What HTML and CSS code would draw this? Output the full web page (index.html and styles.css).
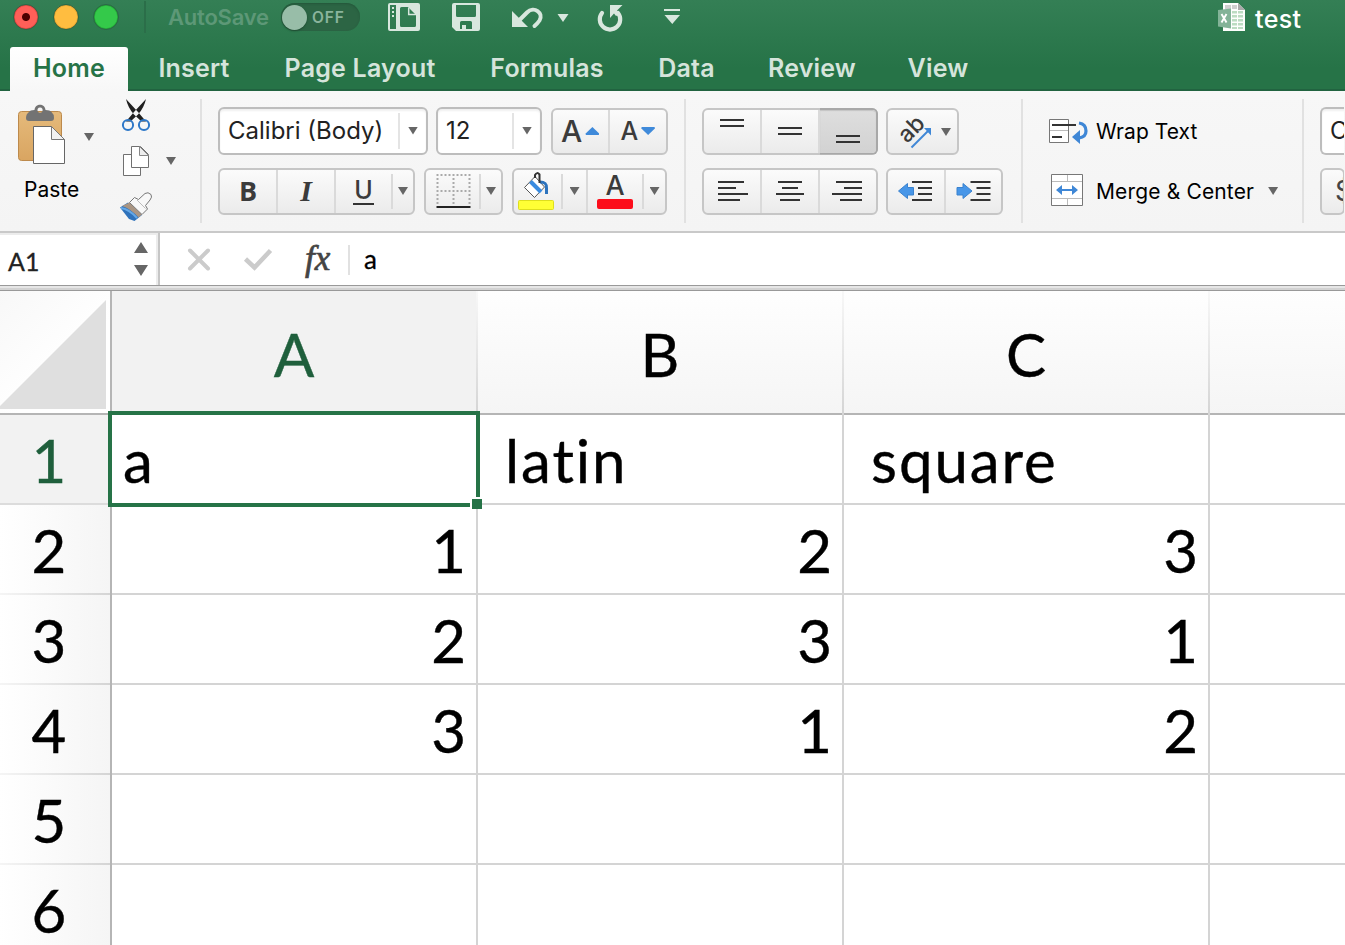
FILE: index.html
```html
<!DOCTYPE html>
<html lang="en">
<head>
<meta charset="utf-8">
<title>test</title>
<link rel="stylesheet" href="styles.css">
</head>
<body>
<header class="titlebar">
  <div class="toprow">
    <div class="lights"><i class="light red"></i><i class="light amber"></i><i class="light green"></i></div>
    <i class="topsep"></i>
    <span class="autosave">AutoSave</span>
    <span class="switch"><i class="knob"></i><span>OFF</span></span>
    <svg class="quick" width="300" height="36" viewBox="385 0 300 36" fill="#d8e7de">
      <path fill-rule="evenodd" d="M390 3H418Q420 3 420 5V29Q420 31 418 31H390Q388 31 388 29V5Q388 3 390 3ZM390 5V29H396V5ZM401.500 7Q400 7 400 8.500V25.500Q400 27 401.500 27H414.500Q416 27 416 25.500V15L408 7Z"/>
      <path d="M392 7h2v2h-2zM392 11h2v2h-2zM392 15h2v2h-2z"/>
      <path d="M408.700 7.500V14.500H416" fill="none" stroke="#d8e7de" stroke-width="1.500"/>
      <path fill-rule="evenodd" d="M454 3H478Q480 3 480 5V29Q480 31 478 31H456L452 27V5Q452 3 454 3ZM456 5V15.500Q456 17 457.500 17H474.500Q476 17 476 15.500V5ZM461.500 21Q460 21 460 22.500V29H462V25H466V29H472V22.500Q472 21 470.500 21Z"/>
      <path d="M512 11V27H528Z"/>
      <path d="M519.500 20L527 12.500C534 5.500 544 13 539.500 20.500Q537.500 23.500 534.500 26" fill="none" stroke="#d8e7de" stroke-width="4" stroke-linecap="round"/>
      <path d="M557.500 14h11l-5.500 8z"/>
      <path d="M602 13A10.200 10.200 0 1 0 618 13" fill="none" stroke="#d8e7de" stroke-width="4.200" stroke-linecap="round"/>
      <path d="M610 5H622.500L617 10.500L620 14L616 16L614 13.500L610 18Z"/>
      <path d="M664 9h16v2h-16zM664.500 15h15.500l-7.750 9z"/>
    </svg>
    <div class="doc">
      <svg width="28" height="30" viewBox="1218 2 28 30">
        <path d="M1223 3H1238L1245 10V31H1223Z" fill="#fdfefd"/>
        <path d="M1225 5h6v4h-6zM1232 5h5v4h-5z" fill="#cfcfcf"/>
        <path d="M1238 3V10H1245Z" fill="#aaa"/>
        <path d="M1232 11h5v2.500h-5zM1238 11h5v2.500h-5zM1232 15h5v2.500h-5zM1238 15h5v2.500h-5zM1232 19h5v2.500h-5zM1238 19h5v2.500h-5zM1232 23h5v2.500h-5zM1238 23h5v2.500h-5zM1232 27h5v2h-5zM1238 27h5v2h-5z" fill="#bcdcc2"/>
        <path d="M1218 10L1231 8.500V28.500L1218 26.500Z" fill="#83b398"/>
        <path d="M1221.500 14L1226.500 22.500M1226.500 14L1221.500 22.500" stroke="#fff" stroke-width="1.900"/>
      </svg>
      <span>test</span>
    </div>
  </div>
  <nav class="tabs">
    <span class="tab active t1">Home</span><span class="tab t2">Insert</span><span class="tab t3">Page Layout</span><span class="tab t4">Formulas</span><span class="tab t5">Data</span><span class="tab t6">Review</span><span class="tab t7">View</span>
  </nav>
</header>

<section class="ribbon">
  <div class="group clip">
    <div class="pastecol">
      <svg width="82" height="66" viewBox="14 102 82 66">
        <defs><linearGradient id="tan" x1="0" y1="0" x2="0" y2="1"><stop offset="0" stop-color="#e5ba7b"/><stop offset="1" stop-color="#d9a561"/></linearGradient></defs>
        <rect x="18.500" y="111.500" width="43" height="49" rx="3" fill="url(#tan)" stroke="#bd8a4c"/>
        <path fill-rule="evenodd" d="M29 112Q30 110 34.500 110C35 103 45 103 45.500 110Q50 110 51.500 112Q54 114 54 118Q54 121 51 121H29Q26 121 26 118Q26 114 29 112ZM40 107.500a2.600 2.600 0 1 0 .1 0Z" fill="#737373"/>
        <path d="M33.500 126.500H51.500L64.500 139.500V163.500H33.500Z" fill="#fff" stroke="#666"/>
        <path d="M51.500 126.500V139.500H64.500Z" fill="#f1f1f1" stroke="#777"/>
        <path d="M84 133h10l-5 8z" fill="#666"/>
      </svg>
      <span>Paste</span>
    </div>
    <svg class="cliptools" width="62" height="130" viewBox="118 96 62 130">
      <path d="M126 99L138 112L146 121.500L141.500 121.500L134 114.500Q128 108 126 99ZM146 99L134 112L126 121.500L130.500 121.500L138 114.500Q144 108 146 99Z" fill="#202020"/>
      <g fill="none" stroke="#2e78c8" stroke-width="2"><circle cx="128" cy="125" r="5.100"/><circle cx="144" cy="125" r="5.100"/></g>
      <path d="M123.500 154.500H140.500V175.500H123.500Z" fill="#fff" stroke="#707070"/>
      <path d="M131.500 146.500H140.500L148.500 154.500V167.500H131.500Z" fill="#fff" stroke="#707070"/>
      <path d="M139.500 146.500V155.500H148.500Z" fill="#eee" stroke="#888"/>
      <path d="M166 157h10l-5 8z" fill="#666"/>
      <path d="M120 207.500L128 202.500L142 215L134.500 221L129 219Z" fill="#2e72bb"/>
      <path d="M122 206L129.500 202.500L142 214.500L138.500 217.500Q131 209 122 206Z" fill="#a99583"/>
      <path d="M121 208Q129 209 137 218" fill="none" stroke="#65a8e7" stroke-width="2"/>
      <path d="M129.500 202.500L134.500 197.500L138.500 199.500L145 193.500Q148 191.500 151 194.500Q152.500 197 150 200L145.500 205.500L147.500 209L142 214.500Z" fill="#f8f8f8" stroke="#777"/>
      <path d="M137 200L145.500 208.500" stroke="#bbb"/>
    </svg>
  </div>
  <i class="vsep"></i>
  <div class="group font">
    <div class="line">
      <div class="combo fontname"><span>Calibri (Body)</span><b><i class="caret"></i></b></div>
      <div class="combo fontsize"><span>12</span><b><i class="caret"></i></b></div>
      <div class="btns sizes">
        <span class="cell"><span class="ga">A</span><i class="up"></i></span>
        <span class="cell"><span class="gs">A</span><i class="down"></i></span>
      </div>
    </div>
    <div class="line">
      <div class="btns biu">
        <span class="cell w58"><b class="gb">B</b></span><span class="cell w58"><span class="gi">I</span></span><span class="cell w55 open"><span class="gu">U</span></span><span class="drop"><i class="caret"></i></span>
      </div>
      <div class="btns borders">
        <span class="cell w53 open"><svg width="36" height="36" viewBox="435.500 173 36 36"><path d="M437 175H472M437 191H472M438 174V206M454 174V206M470 174V206" fill="none" stroke="#aaa" stroke-width="2" stroke-dasharray="2 2"/><path d="M437 207H471" stroke="#222" stroke-width="2"/></svg></span><span class="drop"><i class="caret"></i></span>
      </div>
      <div class="btns fills">
        <span class="cell w47 open bucket"><svg width="42" height="42" viewBox="515 169 42 42"><path d="M524.500 186.500L535 175.500L544.500 186L534.500 196.500Z" fill="#fff" stroke="#555"/><path d="M530.500 180.500L541 191" stroke="#398be0" stroke-width="4"/><path d="M540 181Q547 181 546.500 187V193" fill="none" stroke="#2d73bd" stroke-width="3"/><path d="M535 177V174Q537 170.500 539.500 173.500V182" fill="none" stroke="#333" stroke-width="2"/><rect x="518.500" y="199.500" width="35" height="9" rx="1" fill="#ffff35" stroke="#dede1e"/></svg></span><span class="drop full"><i class="caret"></i></span>
        <span class="cell w56 open fc"><span>A</span><i></i></span><span class="drop"><i class="caret"></i></span>
      </div>
    </div>
  </div>
  <i class="vsep"></i>
  <div class="group align">
    <div class="line">
      <div class="btns tri">
        <span class="cell w58"><svg width="30" height="30" viewBox="717 116 30 30"><path d="M720 120h24M720 126h24" stroke="#333" stroke-width="2"/></svg></span>
        <span class="cell w58"><svg width="30" height="30" viewBox="775 116 30 30"><path d="M778 128h24M778 134h24" stroke="#333" stroke-width="2"/></svg></span>
        <span class="cell last pressed"><svg width="30" height="30" viewBox="833 116 30 30"><path d="M836 136h24M836 142h24" stroke="#333" stroke-width="2"/></svg></span>
      </div>
      <div class="btns orient"><svg width="68" height="44" viewBox="889 109 68 44"><text x="908" y="143" transform="rotate(-45 908 143)" class="ab">ab</text><path d="M912.500 146.500L930 129" stroke="#3f87d6" stroke-width="2"/><path d="M925 127H932V134.500Z" fill="#3f87d6"/><path d="M942 127h10l-5 8z" fill="#666"/></svg></div>
    </div>
    <div class="line">
      <div class="btns tri">
        <span class="cell w58"><svg width="34" height="30" viewBox="715 176 34 30"><path d="M718 182h26M718 188h18M718 194h30M718 200h22" stroke="#333" stroke-width="2"/></svg></span>
        <span class="cell w58"><svg width="34" height="30" viewBox="773 176 34 30"><path d="M778 182h24M782 188h16M776 194h28M780 200h20" stroke="#333" stroke-width="2"/></svg></span>
        <span class="cell last"><svg width="34" height="30" viewBox="831 176 34 30"><path d="M836 182h26M844 188h18M832 194h30M840 200h22" stroke="#333" stroke-width="2"/></svg></span>
      </div>
      <div class="btns indent">
        <span class="cell w58"><svg width="38" height="30" viewBox="897 176 38 30"><path d="M912 182h20M918 188h14M918 194h14M912 200h20" stroke="#333" stroke-width="2"/><path d="M898.500 191L907.500 183.500V187.500H913.500V195H907.500V198.500Z" fill="#4796e8" stroke="#3b82ce"/></svg></span>
        <span class="cell w57"><svg width="38" height="30" viewBox="954.500 176 38 30"><path d="M970 182h20M976 188h14M976 194h14M970 200h20" stroke="#333" stroke-width="2"/><path d="M971.500 191L962.500 183.500V187.500H956.500V195H962.500V198.500Z" fill="#4796e8" stroke="#3b82ce"/></svg></span>
      </div>
    </div>
  </div>
  <i class="vsep"></i>
  <div class="group wrap">
    <div class="line"><svg width="42" height="28" viewBox="1048 118 42 28"><path d="M1049.500 120.500h19v23h-19z" fill="#fff" stroke="#777"/><path d="M1050 131.500h18" stroke="#bbb"/><path d="M1052 126h24M1052 138h10" stroke="#333" stroke-width="2"/><path d="M1079 124Q1086 125 1086 132Q1086 138 1079 139" fill="none" stroke="#3f87d6" stroke-width="3.200"/><path d="M1072 138L1080 131V145Z" fill="#3f87d6"/></svg><span>Wrap Text</span></div>
    <div class="line"><svg width="42" height="36" viewBox="1048 173 42 36"><path d="M1051.500 174.500h31v31h-31z" fill="#fff" stroke="#777"/><path d="M1052 181.500h30M1052 198.500h30M1067.500 175v6M1067.500 199v6" stroke="#bbb"/><path d="M1060 190h14" stroke="#3f87d6" stroke-width="2"/><path d="M1056 190l6-5v10zM1078 190l-6-5v10z" fill="#3f87d6"/></svg><span class="mc">Merge &amp; Center</span><i class="caret"></i></div>
  </div>
  <i class="vsep"></i>
  <div class="group number">
    <div class="line"><div class="combo numfmt"><span>C</span></div></div>
    <div class="line"><div class="btns money"><span>$</span></div></div>
  </div>
</section>

<section class="formulabar">
  <div class="namebox"><span>A1</span><svg width="16" height="36" viewBox="133 242 16 36" fill="#666"><path d="M134 253h14l-7-11zM134 265h14l-7 11z"/></svg></div>
  <svg class="marks" width="90" height="30" viewBox="185 246 90 30" fill="none" stroke="#cbcbcb" stroke-width="4"><path d="M190 251.500L208 269.500M208 251.500L190 269.500" stroke-linecap="round"/><path d="M245.500 260L254.500 268.500L270.500 251.500" stroke-width="4.500"/></svg>
  <span class="fx">fx</span>
  <i class="fsep"></i>
  <span class="content">a</span>
</section>
<div class="splitter"></div>

<main class="sheet">
  <div class="corner"><svg width="106" height="109" viewBox="0 0 106 109"><path d="M106 0V109H0V106Z" fill="#dfdfdf"/></svg></div>
  <div class="ch sel">A</div><div class="ch">B</div><div class="ch">C</div><div class="ch end"></div>
  <div class="rh sel">1</div><div class="c txt active">a<i class="outline"></i><i class="handle"></i></div><div class="c txt">latin</div><div class="c txt">square</div><div class="c end"></div>
  <div class="rh">2</div><div class="c">1</div><div class="c">2</div><div class="c">3</div><div class="c end"></div>
  <div class="rh">3</div><div class="c">2</div><div class="c">3</div><div class="c">1</div><div class="c end"></div>
  <div class="rh">4</div><div class="c">3</div><div class="c">1</div><div class="c">2</div><div class="c end"></div>
  <div class="rh">5</div><div class="c"></div><div class="c"></div><div class="c"></div><div class="c end"></div>
  <div class="rh">6</div><div class="c"></div><div class="c"></div><div class="c"></div><div class="c end"></div>
</main>
</body>
</html>
```
FILE: styles.css
```css
* { box-sizing: border-box; }
body {
  margin: 0;
  width: 1345px;
  height: 945px;
  overflow: hidden;
  display: flex;
  flex-direction: column;
  background: #fff;
  font-family: Inter, "Liberation Sans", sans-serif;
  color: #000;
}
svg { display: block; flex: none; }

/* title bar */
.titlebar {
  height: 91px;
  flex: none;
  background: linear-gradient(#347f55, #267347 75%);
  box-shadow: inset 0 -2px #216340;
}
.toprow { display: flex; height: 47px; align-items: flex-start; }
.lights { display: flex; gap: 14px; padding: 4px 0 0 13px; }
.light { width: 26px; height: 26px; border-radius: 50%; border: 1px solid #2b6646; background-clip: padding-box; }
.red { background: radial-gradient(circle, #4d0000 0 3.5px, #ff5f58 4.500px 10.500px, #d83e38 12px); }
.amber { background: radial-gradient(circle, #ffbd40 10.500px, #dc9c28 12px); }
.green { background: radial-gradient(circle, #34c94a 10.500px, #1ea231 12px); }
.topsep { width: 2px; height: 32px; margin: 1px 22px 0 25px; background: #2b6e49; }
.autosave { width: 113px; font-size: 22px; font-weight: 600; line-height: 34px; letter-spacing: -.2px; color: #5d9877; white-space: nowrap; }
.switch { display: flex; align-items: center; width: 79px; height: 28px; margin-top: 3px; border-radius: 14px; background: #2c6544; box-shadow: inset 0 1px 2px #24573a; color: #8ab49c; font-size: 15.500px; font-weight: 600; letter-spacing: .9px; }
.knob { width: 25px; height: 25px; margin: 0 5px 0 1px; border-radius: 50%; background: #98bda8; box-shadow: 0 1px 2px #1d4b31; }
.quick { margin-left: 25px; }
.doc { display: flex; margin: 2px 0 0 533px; gap: 9px; color: #fff; font-size: 25px; font-weight: 500; line-height: 35px; letter-spacing: .4px; }
.tabs { display: flex; height: 44px; padding-left: 10px; font-size: 25px; font-weight: 600; line-height: 42px; letter-spacing: .2px; color: #d5e4db; }
.tab { text-align: center; white-space: nowrap; }
.tab.active { color: #267347; background: linear-gradient(#fff, #f7f7f7); border-radius: 3px 3px 0 0; margin-right: 3px; }
.t1 { width: 118px; } .t2 { width: 126px; } .t3 { width: 206px; } .t4 { width: 168px; } .t5 { width: 111px; } .t6 { width: 140px; } .t7 { width: 112px; }

/* ribbon */
.ribbon { display: flex; height: 142px; flex: none; border-bottom: 2px solid #c9c9c9; background: linear-gradient(#f7f7f7, #f4f4f4); font-size: 21px; overflow: hidden; }
.vsep { flex: none; width: 2px; height: 124px; margin-top: 8px; background: #e1e1e1; }
.group { flex: none; display: flex; }
.clip { width: 200px; padding-left: 14px; }
.pastecol { width: 104px; padding-top: 11px; line-height: 44px; }
.pastecol span { display: block; padding-left: 10px; }
.cliptools { margin-top: 5px; }
.font, .align, .wrap, .number { flex-direction: column; gap: 12px; padding-top: 16px; }
.font { width: 482px; padding-left: 16px; }
.align { width: 335px; padding-left: 16px; }
.wrap { width: 279px; padding-left: 25px; }
.number { width: 40px; padding-left: 16px; overflow: hidden; }
.line { display: flex; height: 48px; align-items: center; gap: 8px; }
.combo { flex: none; display: flex; align-items: center; height: 48px; border: 2px solid #bdbdbd; border-radius: 6px; background: #fff; box-shadow: inset 0 2px 2px #f0f0f0; font-size: 24px; line-height: 44px; color: #222; padding-left: 8px; padding-bottom: 1px; white-space: nowrap; overflow: hidden; }
.combo b { height: 36px; width: 28px; margin-left: auto; border-left: 2px solid #e4e4e4; display: flex; align-items: center; justify-content: center; }
.fontname { width: 210px; } .fontsize { width: 106px; }
.numfmt, .money { width: 25px; border-right: 0; border-radius: 6px 0 0 6px; }
.caret { flex: none; width: 10px; height: 8px; background: #666; clip-path: polygon(0 0, 100% 0, 50% 100%); }
.btns { flex: none; display: flex; height: 47px; border: 2px solid #c6c6c6; border-radius: 6px; background: linear-gradient(#fbfbfb, #ebebeb); overflow: hidden; }
.cell { flex: none; display: flex; align-items: center; justify-content: center; height: 100%; border-right: 2px solid #dadada; color: #3b3b3b; }
.cell:last-child, .open { border-right: 0; }
.w58 { width: 58px; } .w57 { width: 55px; } .w56 { width: 56px; } .w55 { width: 55px; } .w53 { width: 53px; } .w47 { width: 47px; }
.drop { display: flex; flex: 1; align-items: center; justify-content: center; height: 35px; margin-top: 4px; border-left: 2px solid #dadada; }
.drop.full { flex: none; width: 25px; }
.sizes { width: 117px; margin-left: .5px; }
.sizes .cell { flex: 1; gap: 3px; font-weight: 500; }
.ga { font-size: 30px; } .gs { font-size: 25px; }
.up, .down { width: 14px; height: 8px; background: #3f8ada; clip-path: polygon(50% 0, 100% 85%, 95% 100%, 5% 100%, 0 85%); }
.down { clip-path: polygon(0 15%, 5% 0, 95% 0, 100% 15%, 50% 100%); }
.biu { width: 197px; } .borders { width: 79px; margin-left: 1px; } .fills { width: 155px; margin-left: 1px; }
.gb { font: 700 27px/40px "Open Sans", sans-serif; }
.gi { font: italic 700 30px "Liberation Serif", serif; }
.gu { font-size: 25px; font-weight: 500; line-height: 25px; border-bottom: 2px solid #333; padding: 0 1px; margin-top: 1px; }
.bucket { justify-content: flex-start; }
.bucket svg { margin-left: 1px; }
.fc { flex-direction: column; border-left: 2px solid #dadada; }
.fc span { font-size: 27px; font-weight: 500; line-height: 27px; margin-top: -1px; }
.fc i { width: 36px; height: 10px; border-radius: 2px; background: #fc0d1b; }
.tri { width: 176px; } .indent { width: 117px; } .orient { width: 73px; }
.last { width: 56px; }
.tri .pressed { background: linear-gradient(#dedede, #d2d2d2); box-shadow: inset 0 1px 1px #c4c4c4, 0 0 0 2px #a8a8a8; clip-path: inset(-2px -2px -2px 0); border-radius: 0 4px 4px 0; }
.tri:has(.pressed) { overflow: visible; }
.ab { font: 500 23px Inter, sans-serif; fill: #3b3b3b; }
.wrap .line { gap: 6px; }
.wrap span { letter-spacing: .07px; }
.wrap .mc { margin-right: 8px; letter-spacing: .15px; }
.money { font-size: 28px; color: #444; padding-left: 13px; line-height: 42px; }

/* formula bar */
.formulabar { display: flex; height: 52px; flex: none; align-items: center; background: #fff; padding-top: 1px; }
.namebox { display: flex; justify-content: space-between; align-items: center; width: 160px; height: 52px; margin-top: -1px; padding: 5px 9px 0 8px; border-right: 2px solid #c6c6c6; box-shadow: inset -2px 2px #ececec; font: 25px Lato, sans-serif; color: #222; -webkit-text-stroke: .3px; }
.namebox span { margin-top: -2px; }
.namebox svg { margin-top: -4px; }
.marks { margin-left: 25px; margin-top: 1px; }
.fx { width: 44px; margin-left: 30px; margin-top: -2px; font: italic 400 35px/40px "Liberation Serif", serif; color: #444; -webkit-text-stroke: .7px #444; }
.fsep { width: 2px; height: 30px; background: #e1e1e1; margin: 0 14px 0 -1px; }
.content { font: 26px Lato, sans-serif; -webkit-text-stroke: .3px; margin-top: -1px; }
.splitter { height: 6px; flex: none; background: linear-gradient(#999 0 1px, #e6e6e6 1px 3px, #d2d2d2 3px 5px, #999 5px); }

/* sheet */
.sheet { display: grid; width: 1345px; grid-template-columns: 112px 366px 366px 366px 135px; grid-template-rows: 124px repeat(6, 90px); font: 60px Lato, sans-serif; -webkit-text-stroke: .4px; flex: none; }
.corner { border-right: 2px solid #b5b5b5; border-bottom: 2px solid #b5b5b5; padding-top: 9px; background: linear-gradient(135deg, #f8f8f8, #fff 60%); }
.ch { text-align: center; line-height: 127px; border-right: 2px solid; border-image: linear-gradient(#f8f8f8, #d4d4d4) 1; background: linear-gradient(#fefefe, #f5f5f5); box-shadow: inset 0 -2px #b5b5b5; }
.ch.sel, .rh.sel { color: #1f5f3c; background: #f2f2f2; }
.rh { border-right: 2px solid #b5b5b5; text-align: center; padding-right: 12px; line-height: 91px; height: 90px; }
.rh.sel { background: linear-gradient(#dcdcdc, #dcdcdc) bottom / 100% 2px no-repeat, #f2f2f2; }
.rh:not(.sel) { background: linear-gradient(90deg, #f5f5f5, #d4d4d4) bottom / 100% 2px no-repeat, linear-gradient(90deg, #fff, #f5f5f5); }
.c { position: relative; height: 90px; border-right: 2px solid #d4d4d4; border-bottom: 2px solid #d4d4d4; text-align: right; padding: 0 10px; line-height: 91px; }
.c.txt { text-align: left; padding-left: 27px; letter-spacing: 1.9px; }
.c.active { padding-left: 11px; }
.c.end, .ch.end { border-right: 0; }
.outline { position: absolute; left: -4px; top: -4px; width: 372px; height: 96px; border: 4px solid #267347; }
.handle { position: absolute; left: 358px; top: 82px; width: 12px; height: 12px; background: #267347; border: 2px solid #fff; border-right: 0; border-bottom: 0; z-index: 1; }
```
